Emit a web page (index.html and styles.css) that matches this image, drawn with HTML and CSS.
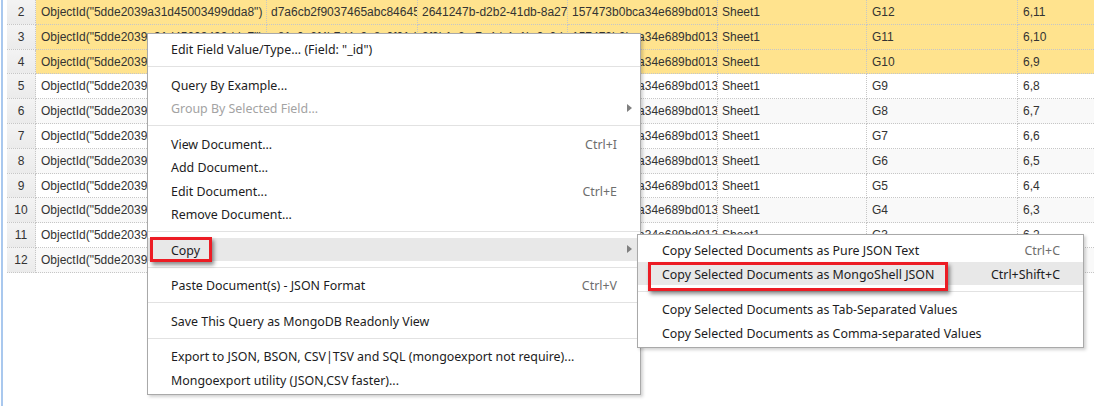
FILE: index.html
```html
<!DOCTYPE html>
<html>
<head>
<meta charset="utf-8">
<link rel="stylesheet" href="styles.css">
</head>
<body>
<div class="app">
  <div class="edge"></div>
  <div class="grid">
    <div class="row sel"><div class="cell num">2</div><div class="cell c1">ObjectId("5dde2039a31d45003499dda8")</div><div class="cell c2">d7a6cb2f9037465abc84645b2e1f0c9d</div><div class="cell c3">2641247b-d2b2-41db-8a27</div><div class="cell c4">157473b0bca34e689bd0134e</div><div class="cell c5">Sheet1</div><div class="cell c6">G12</div><div class="cell c7">6,11</div></div>
    <div class="row sel"><div class="cell num">3</div><div class="cell c1">ObjectId("5dde2039a31d45003499dda7")</div><div class="cell c2">a81c0e2f4b7d4a9e8c2f01d3b5a6c7e8</div><div class="cell c3">9f3b1c2a-7e4d-4a1b-9c0d</div><div class="cell c4">157473b0bca34e689bd0134e</div><div class="cell c5">Sheet1</div><div class="cell c6">G11</div><div class="cell c7">6,10</div></div>
    <div class="row sel"><div class="cell num">4</div><div class="cell c1">ObjectId("5dde2039a31d45003499dda6")</div><div class="cell c2">b2d4f6a8c0e24b6d8f0a2c4e6a8b0d2f</div><div class="cell c3">4c5d6e7f-8a9b-4c0d-8e1f</div><div class="cell c4">157473b0bca34e689bd0134e</div><div class="cell c5">Sheet1</div><div class="cell c6">G10</div><div class="cell c7">6,9</div></div>
    <div class="row"><div class="cell num">5</div><div class="cell c1">ObjectId("5dde2039a31d45003499dda5")</div><div class="cell c2">c3e5a7b9d1f34c5e7a9b1d3f5a7c9e1b</div><div class="cell c3">1a2b3c4d-5e6f-4a7b-8c9d</div><div class="cell c4">157473b0bca34e689bd0134e</div><div class="cell c5">Sheet1</div><div class="cell c6">G9</div><div class="cell c7">6,8</div></div>
    <div class="row alt"><div class="cell num">6</div><div class="cell c1">ObjectId("5dde2039a31d45003499dda4")</div><div class="cell c2">d4f6b8c0e2a44d6f8b0c2e4a6b8d0f2c</div><div class="cell c3">6e7f8a9b-0c1d-4e2f-9a3b</div><div class="cell c4">157473b0bca34e689bd0134e</div><div class="cell c5">Sheet1</div><div class="cell c6">G8</div><div class="cell c7">6,7</div></div>
    <div class="row"><div class="cell num">7</div><div class="cell c1">ObjectId("5dde2039a31d45003499dda3")</div><div class="cell c2">e5a7c9d1f3b54e7a9c1d3f5b7c9e1a3d</div><div class="cell c3">2b3c4d5e-6f7a-4b8c-9d0e</div><div class="cell c4">157473b0bca34e689bd0134e</div><div class="cell c5">Sheet1</div><div class="cell c6">G7</div><div class="cell c7">6,6</div></div>
    <div class="row alt"><div class="cell num">8</div><div class="cell c1">ObjectId("5dde2039a31d45003499dda2")</div><div class="cell c2">f6b8d0e2a4c64f8b0d2e4a6c8d0f2b4e</div><div class="cell c3">7f8a9b0c-1d2e-4f3a-8b4c</div><div class="cell c4">157473b0bca34e689bd0134e</div><div class="cell c5">Sheet1</div><div class="cell c6">G6</div><div class="cell c7">6,5</div></div>
    <div class="row"><div class="cell num">9</div><div class="cell c1">ObjectId("5dde2039a31d45003499dda1")</div><div class="cell c2">a7c9e1f3b5d74a9c1e3f5b7d9e1a3c5f</div><div class="cell c3">3c4d5e6f-7a8b-4c9d-0e1f</div><div class="cell c4">157473b0bca34e689bd0134e</div><div class="cell c5">Sheet1</div><div class="cell c6">G5</div><div class="cell c7">6,4</div></div>
    <div class="row alt"><div class="cell num">10</div><div class="cell c1">ObjectId("5dde2039a31d45003499dda0")</div><div class="cell c2">b8d0f2a4c6e84b0d2f4a6c8e0f2b4d6a</div><div class="cell c3">8a9b0c1d-2e3f-4a4b-9c5d</div><div class="cell c4">157473b0bca34e689bd0134e</div><div class="cell c5">Sheet1</div><div class="cell c6">G4</div><div class="cell c7">6,3</div></div>
    <div class="row"><div class="cell num">11</div><div class="cell c1">ObjectId("5dde2039a31d45003499dd9f")</div><div class="cell c2">c9e1a3b5d7f94c1e3a5b7d9f1a3c5e7b</div><div class="cell c3">4d5e6f7a-8b9c-4d0e-8f1a</div><div class="cell c4">157473b0bca34e689bd0134e</div><div class="cell c5">Sheet1</div><div class="cell c6">G3</div><div class="cell c7">6,2</div></div>
    <div class="row alt"><div class="cell num">12</div><div class="cell c1">ObjectId("5dde2039a31d45003499dd9e")</div><div class="cell c2">d0f2b4c6e8a04d2f4b6c8e0a2b4d6f8c</div><div class="cell c3">9b0c1d2e-3f4a-4b5c-8d6e</div><div class="cell c4">157473b0bca34e689bd0134e</div><div class="cell c5">Sheet1</div><div class="cell c6">G2</div><div class="cell c7">6,1</div></div>
  </div>
</div>

<div class="menu">
  <div class="item"><span class="label">Edit Field Value/Type... (Field: "_id")</span></div>
  <div class="sep"></div>
  <div class="item"><span class="label">Query By Example...</span></div>
  <div class="item dis"><span class="label">Group By Selected Field...</span><span class="arrow"></span></div>
  <div class="sep"></div>
  <div class="item"><span class="label">View Document...</span><span class="key">Ctrl+I</span></div>
  <div class="item"><span class="label">Add Document...</span></div>
  <div class="item"><span class="label">Edit Document...</span><span class="key">Ctrl+E</span></div>
  <div class="item"><span class="label">Remove Document...</span></div>
  <div class="sep"></div>
  <div class="item hl"><span class="label">Copy</span><span class="arrow"></span></div>
  <div class="sep"></div>
  <div class="item"><span class="label">Paste Document(s) - JSON Format</span><span class="key">Ctrl+V</span></div>
  <div class="sep"></div>
  <div class="item"><span class="label">Save This Query as MongoDB Readonly View</span></div>
  <div class="sep"></div>
  <div class="item"><span class="label">Export to JSON, BSON, CSV|TSV and SQL (mongoexport not require)...</span></div>
  <div class="item"><span class="label">Mongoexport utility (JSON,CSV faster)...</span></div>
</div>

<div class="menu submenu">
  <div class="item"><span class="label">Copy Selected Documents as Pure JSON Text</span><span class="key">Ctrl+C</span></div>
  <div class="item hl"><span class="label">Copy Selected Documents as MongoShell JSON</span><span class="key dark">Ctrl+Shift+C</span></div>
  <div class="sep"></div>
  <div class="item"><span class="label">Copy Selected Documents as Tab-Separated Values</span></div>
  <div class="item"><span class="label">Copy Selected Documents as Comma-separated Values</span></div>
</div>

<div class="mark mark-copy"></div>
<div class="mark mark-shell"></div>
</body>
</html>
```

FILE: styles.css
```css
* { box-sizing: border-box; }

html, body {
  margin: 0;
  padding: 0;
  background: #ffffff;
  overflow: hidden;
}

body {
  width: 1094px;
  height: 406px;
  position: relative;
  font-family: "Liberation Sans", Arial, sans-serif;
  font-size: 12px;
  color: #333333;
}

.app {
  display: flex;
  height: 406px;
}

.edge {
  flex: none;
  width: 2px;
  margin-left: 1px;
  margin-right: 4px;
  background: #a9c8ee;
}

.grid {
  flex: none;
  display: flex;
  flex-direction: column;
}

.row {
  display: flex;
  height: 24.8px;
}

.row.sel { background: #ffe38e; }
.row.alt { background: #f9f9f9; }

.cell {
  flex: none;
  height: 100%;
  padding-top: 1px;
  padding-left: 4px;
  border-right: 1px dotted #c6c6c6;
  border-bottom: 1px dotted #c6c6c6;
  line-height: 23px;
  overflow: hidden;
  white-space: nowrap;
}

.cell.num {
  width: 29px;
  padding-left: 0;
  text-align: center;
  background: linear-gradient(#f3f3f3, #ebebeb);
  color: #333;
}

.c1 { width: 231px; padding-left: 5px; }
.c2 { width: 151px; padding-left: 4px; }
.c3 { width: 150px; }
.c4 { width: 150px; }
.c5 { width: 149px; }
.c6 { width: 151px; padding-left: 5px; }
.c7 { width: 100px; padding-left: 5px; border-right: none; }

/* context menu */
.menu {
  position: absolute;
  z-index: 10;
  left: 147px;
  top: 33px;
  width: 494px;
  padding: 3px 0;
  background: #ffffff;
  border: 1px solid #a9a9a9;
  box-shadow: 2px 2px 3px rgba(0, 0, 0, 0.18);
  font-family: "Noto Sans", "Open Sans", sans-serif;
  font-size: 12.4px;
  color: #1c1c22;
}

.item {
  position: relative;
  display: flex;
  align-items: center;
  height: 23.5px;
  padding: 2px 23px 0 23px;
  white-space: nowrap;
}

.item .label { flex: 1; }

.item .key { color: #6e6e6e; }
.item .key.dark { color: #1c1c22; }

.item.hl { background: #e8e8e8; }
.item.dis { color: #a3a3a3; }

.arrow {
  position: absolute;
  right: 8px;
  top: 50%;
  margin-top: -4px;
  width: 0;
  height: 0;
  border-left: 5px solid #7f7f7f;
  border-top: 4px solid transparent;
  border-bottom: 4px solid transparent;
}

.sep {
  height: 12px;
  display: flex;
  align-items: center;
}

.sep::after {
  content: "";
  display: block;
  width: 100%;
  height: 1px;
  background: #e2e2e2;
}

.submenu {
  z-index: 11;
  left: 637px;
  top: 234px;
  width: 447px;
}

.submenu .item { padding: 2px 23px 0 24px; }

/* annotation boxes */
.mark {
  position: absolute;
  z-index: 12;
  border: 3px solid #ec1c24;
  box-shadow: 2px 3px 4px rgba(0, 0, 0, 0.45);
}

.mark-copy {
  left: 150px;
  top: 237px;
  width: 62px;
  height: 25px;
}

.mark-shell {
  left: 648px;
  top: 262px;
  width: 300px;
  height: 29px;
}
```
